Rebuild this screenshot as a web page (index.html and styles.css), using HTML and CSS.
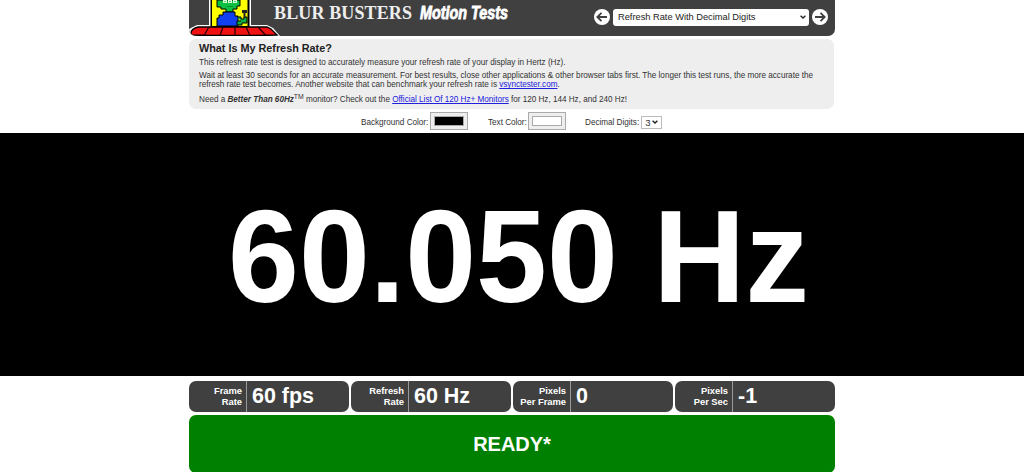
FILE: index.html
```html
<!DOCTYPE html>
<html lang="en">
<head>
<meta charset="utf-8">
<title>Refresh Rate With Decimal Digits</title>
<link rel="stylesheet" href="styles.css">
</head>
<body>
<header class="header">
  <svg class="brand" viewBox="0 0 340 36" role="img" aria-label="Blur Busters Motion Tests">
    <path d="M20 0H62V25H78L84 28 91 36H0V29L8 25H20Z" fill="#fff"/>
    <path d="M21.500 0H60.500V27H21.500Z" fill="#000"/>
    <path d="M23 0H58.500V26H23Z" fill="#ff0"/>
    <path d="M28 0V7H32V9H37V12H44V9H48V6H51V0Z" fill="#0cc044" stroke="#000"/>
    <path d="M34 0h4v3h-4zM39 0h4v3h-4zM44 0h4v3h-4z" fill="#d8ffd8"/>
    <path d="M36 1v1M41 1v1M46 1v1M38 6.500H44" stroke="#083"/>
    <path d="M28 26V18H30V15H34V12H46V16H49V26Z" fill="#1040f0" stroke="#000"/>
    <path d="M48 17H52V19H55V17H58V23H53V25H48V21H52" fill="#0cb040" stroke="#000"/>
    <path d="M53 10H58V13H56.500V18H54.500V13H53Z" fill="#222"/>
    <path d="M9 27H78L82 29 88 35Q45 36 2 35Q1 29 9 27Z" fill="#f01212" stroke="#000" stroke-width="1.300"/>
    <path d="M20 27 15 35.500M34 27 31 35.500M46 27V35.500M57 27 61 35.500M69 27 77 35.500" stroke="#200" stroke-width="1.200"/>
    <text class="wordmark" x="85" y="18.500" textLength="138" lengthAdjust="spacing">BLUR BUSTERS</text>
    <text class="tagline" x="231" y="18.500" textLength="88" lengthAdjust="spacingAndGlyphs">Motion Tests</text>
  </svg>
  <nav class="nav">
    <svg class="arrow" viewBox="0 0 16 16"><circle cx="8" cy="8" r="8"/><path d="M13 8H3.500M7.500 3.800 3.300 8l4.200 4.200"/></svg>
    <div class="test-select">Refresh Rate With Decimal Digits<svg class="chevron" viewBox="0 0 6 4"><path d="M.6.7 3 3 5.400.7"/></svg></div>
    <svg class="arrow" viewBox="0 0 16 16"><circle cx="8" cy="8" r="8"/><path d="M3 8h9.500M8.500 3.800 12.700 8l-4.200 4.200"/></svg>
  </nav>
</header>
<section class="intro">
  <h1>What Is My Refresh Rate?</h1>
  <p>This refresh rate test is designed to accurately measure your refresh rate of your display in Hertz (Hz).</p>
  <p>Wait at least 30 seconds for an accurate measurement. For best results, close other applications &amp; other browser tabs first. The longer this test runs, the more accurate the<br>refresh rate test becomes. Another website that can benchmark your refresh rate is <a href="#">vsynctester.com</a>.</p>
  <p class="last">Need a <b><i>Better Than 60Hz</i></b><sup>TM</sup> monitor? Check out the <a href="#">Official List Of 120 Hz+ Monitors</a> for 120 Hz, 144 Hz, and 240 Hz!</p>
</section>
<div class="options">
  <div class="option background"><span class="name">Background Color:</span><span class="swatch"><span class="fill black"></span></span></div>
  <div class="option foreground"><span class="name">Text Color:</span><span class="swatch"><span class="fill"></span></span></div>
  <div class="option"><span class="name">Decimal Digits:</span><span class="digits">3<svg class="chevron" viewBox="0 0 6 4"><path d="M.6.7 3 3 5.400.7"/></svg></span></div>
</div>
<main class="display"><div class="reading">60.050 Hz</div></main>
<section class="stats">
  <div class="stat"><div class="label">Frame<br>Rate</div><div class="value">60 fps</div></div>
  <div class="stat"><div class="label">Refresh<br>Rate</div><div class="value">60 Hz</div></div>
  <div class="stat"><div class="label">Pixels<br>Per Frame</div><div class="value">0</div></div>
  <div class="stat"><div class="label">Pixels<br>Per Sec</div><div class="value">-1</div></div>
</section>
<div class="status">READY*</div>
</body>
</html>
```
FILE: styles.css
```css
* { box-sizing: border-box; }
body {
  margin: 0;
  height: 472px;
  overflow: hidden;
  background: #fff;
  color: #333;
  font: 8.16px/9px "Liberation Sans", Arial, sans-serif;
  letter-spacing: -.015px;
}
.header {
  display: flex;
  justify-content: space-between;
  width: 646px;
  height: 36px;
  margin-left: 189px;
  background: #404040;
  border-radius: 0 0 7px 7px;
  overflow: hidden;
}
.brand { width: 340px; height: 36px; }
.wordmark { font: bold 18px "Liberation Serif", serif; fill: #eee; }
.tagline { font: italic bold 17.5px "Liberation Sans", sans-serif; fill: #fff; stroke: #fff; stroke-width: .8px; }
.nav { display: flex; align-items: center; gap: 3px; height: 34px; padding-right: 7px; }
.arrow { width: 16px; height: 16px; fill: #fff; }
.arrow path { fill: none; stroke: #404040; stroke-width: 1.8; }
.test-select {
  display: flex;
  align-items: center;
  justify-content: space-between;
  width: 196px;
  height: 17px;
  padding: 0 3px 0 5px;
  background: #fff;
  border-radius: 3px;
  color: #222;
  font-size: 9.3px;
}
.chevron { width: 6px; height: 4px; fill: none; stroke: #222; stroke-width: 1.4; }
.intro {
  width: 645px;
  height: 70px;
  margin: 3px 0 0 189px;
  padding: 3px 10px 0;
  background: #eee;
  border-radius: 7px;
  white-space: nowrap;
}
.intro h1 { margin: 0 0 4px; color: #222; font-size: 10.85px; line-height: 12px; }
.intro p { margin: 0 0 4.4px; }
.intro .last { padding-top: 1px; }
.intro a { color: #2020dd; }
.intro sup { font-size: 6.8px; line-height: 0; vertical-align: 3px; }
.options { display: flex; width: 302px; height: 24px; margin-left: 361px; padding-top: 2px; white-space: nowrap; }
.option { display: flex; align-items: center; gap: 2px; height: 20px; }
.background { width: 127px; }
.background .name { width: 67px; }
.foreground { width: 97px; }
.foreground .name { width: 38px; }
.name { padding-top: 3px; }
.swatch { width: 38px; height: 18px; padding: 3px; background: #eee; border: 1px solid #aaa; }
.fill { display: block; height: 10px; background: #fff; border: 1px solid #aaa; }
.black { background: #000; }
.digits { display: flex; align-items: center; justify-content: space-between; width: 21px; height: 13px; margin-top: 2px; padding: 0 3px; border: 1px solid #bbb; font-size: 9.5px; }
.display { height: 243px; padding-left: 228px; background: #000; color: #fff; }
.reading { padding-top: 49px; font-size: 127.5px; font-weight: bold; line-height: 146px; white-space: nowrap; transform: scaleY(1.04); }
.stats { display: flex; gap: 2px; width: 646px; margin: 5px 0 3px 189px; }
.stat { display: flex; flex: 1; height: 31px; background: #404040; border-radius: 7px; color: #fff; font-weight: bold; }
.label { width: 58px; padding: 4px 4px 0 0; border-right: 1px solid #999; text-align: right; font-size: 9.4px; line-height: 11px; }
.value { padding-left: 5px; font-size: 21.5px; line-height: 31px; }
.status { width: 646px; height: 58px; margin-left: 189px; background: #008000; border-radius: 7px; color: #fff; font-size: 20px; font-weight: bold; line-height: 59px; text-align: center; }
```
